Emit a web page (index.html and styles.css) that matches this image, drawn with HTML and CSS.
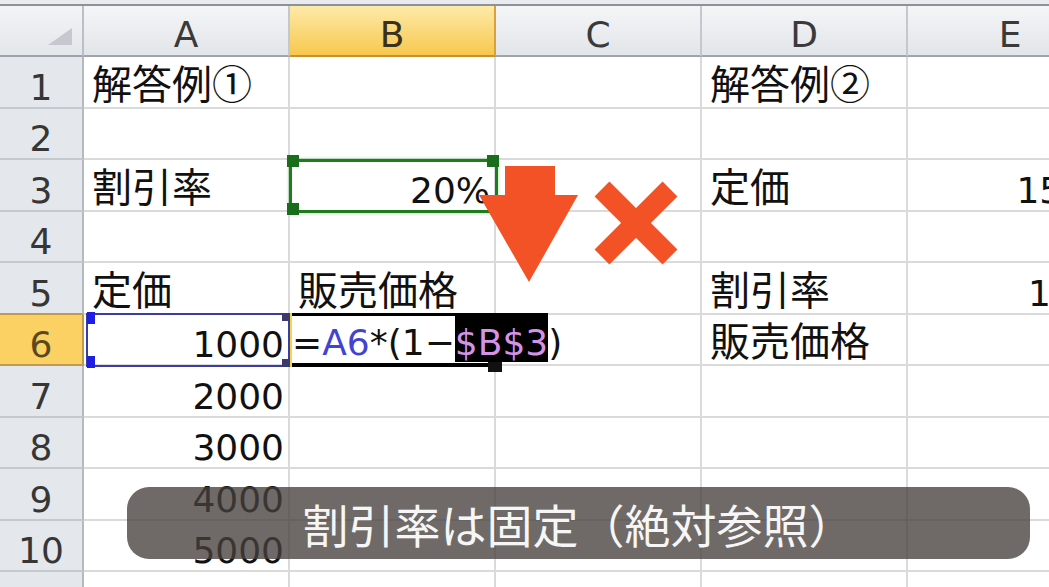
FILE: index.html
```html
<!DOCTYPE html>
<html lang="ja">
<head>
<meta charset="utf-8">
<title>絶対参照</title>
<link rel="stylesheet" href="styles.css">
</head>
<body>
<div class="page">
  <div class="topbar"></div>
  <div class="sheet">
    <div class="corner"><div class="tri"></div></div>
    <div class="ch">A</div>
    <div class="ch sel">B</div>
    <div class="ch">C</div>
    <div class="ch">D</div>
    <div class="ch">E</div>

    <div class="rh">1</div>
    <div class="c jp">解答例①</div><div class="c"></div><div class="c"></div><div class="c jp">解答例②</div><div class="c"></div>

    <div class="rh">2</div>
    <div class="c"></div><div class="c"></div><div class="c"></div><div class="c"></div><div class="c"></div>

    <div class="rh">3</div>
    <div class="c jp">割引率</div><div class="c n">20%</div><div class="c"></div><div class="c jp">定価</div><div class="c n">1500</div>

    <div class="rh">4</div>
    <div class="c"></div><div class="c"></div><div class="c"></div><div class="c"></div><div class="c"></div>

    <div class="rh pre">5</div>
    <div class="c jp">定価</div><div class="c jp">販売価格</div><div class="c"></div><div class="c jp">割引率</div><div class="c n">10%</div>

    <div class="rh sel">6</div>
    <div class="c n">1000</div><div class="c"></div><div class="c"></div><div class="c jp">販売価格</div><div class="c"></div>

    <div class="rh">7</div>
    <div class="c n">2000</div><div class="c"></div><div class="c"></div><div class="c"></div><div class="c"></div>

    <div class="rh">8</div>
    <div class="c n">3000</div><div class="c"></div><div class="c"></div><div class="c"></div><div class="c"></div>

    <div class="rh">9</div>
    <div class="c n">4000</div><div class="c"></div><div class="c"></div><div class="c"></div><div class="c"></div>

    <div class="rh">10</div>
    <div class="c n">5000</div><div class="c"></div><div class="c"></div><div class="c"></div><div class="c"></div>

    <div class="rh"></div>
    <div class="c"></div><div class="c"></div><div class="c"></div><div class="c"></div><div class="c"></div>
  </div>

  <!-- reference highlight of $B$3 -->
  <div class="ref-b3">
    <i class="hd g-tl"></i><i class="hd g-bl"></i><i class="hd g-tr"></i>
  </div>

  <!-- yellow marker between A6 and B6 -->
  <div class="mark"></div>

  <!-- reference highlight of A6 -->
  <div class="ref-a6">
    <i class="hd b-tl"></i><i class="hd b-bl"></i><i class="hd b-tr"></i><i class="hd b-br"></i>
  </div>

  <!-- cell being edited -->
  <div class="edit"></div>
  <div class="formula"><span>=</span><span class="f-ref">A6</span><span>*(1−</span><span class="f-hl">$B$3</span><span>)</span></div>
  <div class="fill"></div>

  <svg class="arrow" width="120" height="130" viewBox="470 160 120 130">
    <polygon points="505,166 555,166 555,195 578,195 529,282 479,195 505,195" fill="#f25226"/>
  </svg>

  <svg class="cross" width="93" height="93" viewBox="590 177 93 93">
    <line x1="602" y1="189" x2="670" y2="257" stroke="#f25226" stroke-width="21"/>
    <line x1="670" y1="189" x2="602" y2="257" stroke="#f25226" stroke-width="21"/>
  </svg>

  <div class="caption">割引率は固定（絶対参照）</div>
</div>
</body>
</html>
```
FILE: styles.css
```css
* { box-sizing: border-box; margin: 0; padding: 0; }
html, body { width: 1049px; height: 587px; overflow: hidden; background: #fff; }

.page { position: relative; width: 1049px; height: 587px; overflow: hidden; }

.topbar { height: 6px; background: #e9ebee; border-bottom: 2px solid #8d9299; }

.sheet {
  display: grid;
  grid-template-columns: 84px repeat(5, 206px);
  grid-template-rows: 51px repeat(11, 51.5px);
  width: 1114px;
}

.corner {
  background: linear-gradient(#f3f4f6, #e3e6ea);
  border-right: 2px solid #b9bfc7;
  border-bottom: 2px solid #9da4ad;
  display: flex;
  align-items: flex-end;
  justify-content: flex-end;
  padding: 0 10px 10px 0;
}
.tri { width: 24px; height: 17px; background: #c5c9cf; clip-path: polygon(100% 0, 100% 100%, 0 100%); }

.ch {
  background: linear-gradient(#f4f5f7, #e2e5e9);
  border-right: 2px solid #c3c8cf;
  border-bottom: 2px solid #9da4ad;
  display: flex;
  align-items: flex-end;
  justify-content: center;
  padding-bottom: 2px;
  font: 36px/36px "DejaVu Sans", sans-serif;
  color: #3a3a3a;
}
.ch.sel {
  background: linear-gradient(#fdeaa8, #f7c84e);
  border-right-color: #d8a13c;
  border-bottom-color: #c98f2c;
  color: #3a3020;
}

.rh {
  background: #e4e7eb;
  border-right: 2px solid #b3b9c1;
  border-bottom: 2px solid #c4c9d0;
  display: flex;
  align-items: flex-end;
  justify-content: center;
  padding-bottom: 1px;
  font: 36px/36px "DejaVu Sans", sans-serif;
  color: #363636;
}
.rh.pre { border-bottom-color: #bf9a4f; }
.rh.sel { background: #fbd163; border-right-color: #c29a4e; border-bottom-color: #bf9a4f; color: #5a4820; }

.c {
  border-right: 2px solid #dadada;
  border-bottom: 2px solid #dadada;
  display: flex;
  align-items: flex-end;
  white-space: nowrap;
  padding: 0 8px 5px 8px;
  color: #111;
}
.c.jp { font: 40px/40px "Noto Sans CJK JP", sans-serif; }
.c.n {
  justify-content: flex-end;
  padding: 0 4px 1px 0;
  font: 36px/36px "DejaVu Sans", sans-serif;
}

/* overlays */
.hd { position: absolute; display: block; }

.ref-b3 {
  position: absolute; left: 289px; top: 159px; width: 209px; height: 54px;
  border: 3px solid #1e7b1e;
  box-shadow: 0 0 3px rgba(90, 200, 90, .6);
}
.ref-b3 .hd { width: 12px; height: 12px; background: #1a6d1a; }
.g-tl { left: -5px; top: -7px; }
.g-bl { left: -5px; top: 41px; }
.g-tr { left: 195px; top: -7px; }

.mark { position: absolute; left: 288px; top: 313px; width: 5px; height: 54px; background: #f2d944; }

.ref-a6 {
  position: absolute; left: 86px; top: 313px; width: 204px; height: 54px;
  border: 2px solid #3c3ca2;
}
.b-tl, .b-bl { width: 8px; height: 12px; background: #1e1ee6; left: -1px; }
.b-tl { top: -3px; }
.b-bl { top: 41px; }
.b-tr, .b-br { width: 8px; height: 8px; background: #3a3a6e; left: 194px; }
.b-tr { top: -2px; }
.b-br { top: 44px; }

.edit {
  position: absolute; left: 292px; top: 313px; width: 208px; height: 54px;
  background: #fff;
  border-top: 3px solid #000;
  border-bottom: 4px solid #000;
  border-right: 3px solid #000;
}
.formula {
  position: absolute; left: 292px; top: 313px; height: 49px;
  display: flex;
  font: 36px/36px "DejaVu Sans", sans-serif;
  color: #111;
  white-space: nowrap;
}
.formula span { display: flex; align-items: flex-end; padding-bottom: 1px; }
.formula .f-ref { color: #4343d2; }
.formula .f-hl { background: #000; color: #d493e6; }
.fill { position: absolute; left: 488px; top: 362px; width: 14px; height: 10px; background: #111; }

.arrow { position: absolute; left: 470px; top: 160px; }
.cross { position: absolute; left: 590px; top: 177px; }

.caption {
  position: absolute; left: 127px; top: 487px; width: 903px; height: 72px;
  border-radius: 22px;
  background: rgba(70, 64, 60, .78);
  display: flex; align-items: center; justify-content: center;
  color: #f6f6f6;
  font: 46px/1 "Noto Sans CJK JP", sans-serif;
}
```
